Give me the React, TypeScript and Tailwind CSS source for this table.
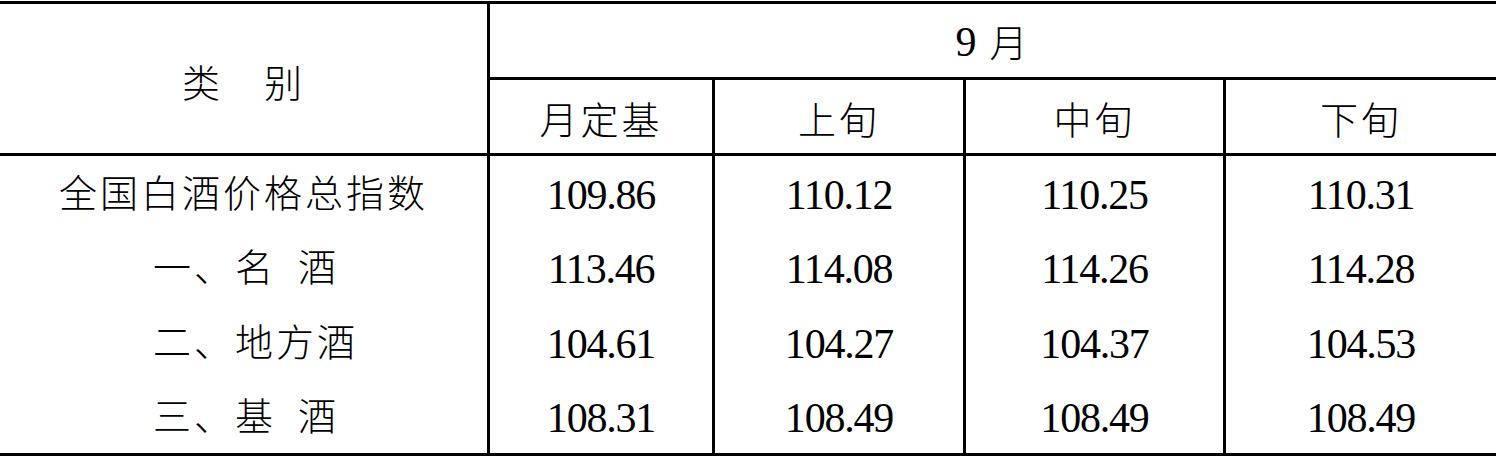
const cn = "[font-family:'Noto_Sans_CJK_SC',sans-serif] font-light text-[38px] tracking-[3px] leading-none text-black";
const num = "[font-family:'Liberation_Serif',serif] text-[42px] tracking-[-1.2px] leading-none text-black";

const cols = "grid grid-cols-[487px_225px_251px_260px_273px]";

type Row = { label: React.ReactNode; values: string[] };

const rows: Row[] = [
  { label: "全国白酒价格总指数", values: ["109.86", "110.12", "110.25", "110.31"] },
  {
    label: (
      <>
        一、名<span className="inline-block w-[22px]" />酒
      </>
    ),
    values: ["113.46", "114.08", "114.26", "114.28"],
  },
  { label: "二、地方酒", values: ["104.61", "104.27", "104.37", "104.53"] },
  {
    label: (
      <>
        三、基<span className="inline-block w-[22px]" />酒
      </>
    ),
    values: ["108.31", "108.49", "108.49", "108.49"],
  },
];

const rowHeights = ["h-[74px]", "h-[74px]", "h-[75px]", "h-[74px]"];

export default function App() {
  return (
    <div className="bg-white w-[1497px] h-[456px] pt-px">
      <div className="w-[1496px] border-y-[3px] border-black">
        {/* header */}
        <div className={`${cols} grid-rows-[76px_73px] border-b-[3px] border-black`}>
          <div className="row-span-2 flex items-center justify-center pt-[4px]">
            <span className={cn}>类　别</span>
          </div>
          <div className="col-span-4 flex items-center justify-center border-l-[3px] border-b-[3px] border-black">
            <span className={`${num} pt-[2px]`}>9</span>
            <span className={`${cn} ml-[14px]`}>月</span>
          </div>
          {["月定基", "上旬", "中旬", "下旬"].map((h) => (
            <div key={h} className="flex items-center justify-center border-l-[3px] border-black pt-[2px]">
              <span className={cn}>{h}</span>
            </div>
          ))}
        </div>

        {/* body */}
        {rows.map((r, i) => (
          <div key={i} className={`${cols} ${rowHeights[i]}`}>
            <div className={`flex items-center ${i === 0 ? "justify-center" : "justify-start pl-[153px]"} pb-[4px]`}>
              <span className={cn}>{r.label}</span>
            </div>
            {r.values.map((v, j) => (
              <div key={j} className="flex items-center justify-center border-l-[3px] border-black pt-[4px]">
                <span className={num}>{v}</span>
              </div>
            ))}
          </div>
        ))}
      </div>
    </div>
  );
}
